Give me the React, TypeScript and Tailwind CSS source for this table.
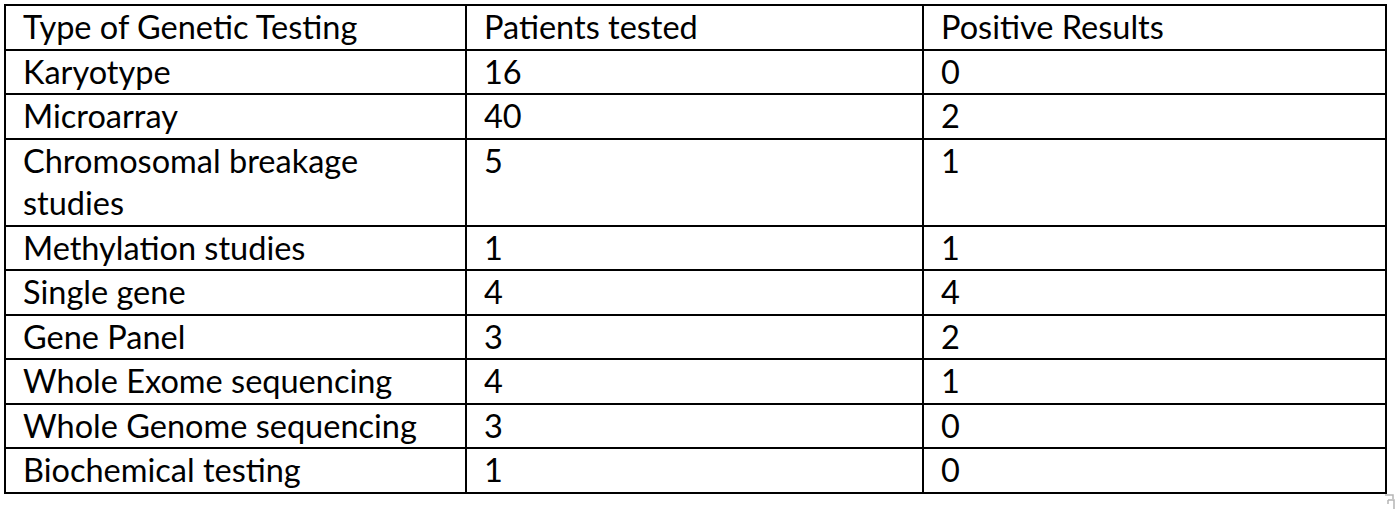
const rows: [string, string, string][] = [
  ["Karyotype", "16", "0"],
  ["Microarray", "40", "2"],
  ["Chromosomal breakage studies", "5", "1"],
  ["Methylation studies", "1", "1"],
  ["Single gene", "4", "4"],
  ["Gene Panel", "3", "2"],
  ["Whole Exome sequencing", "4", "1"],
  ["Whole Genome sequencing", "3", "0"],
  ["Biochemical testing", "1", "0"],
];

const cell = "border-2 border-black px-[17px] align-top";

export default function App() {
  return (
    <div className="relative w-[1398px] h-[512px] bg-white pl-[4px] pt-[4px] font-['Lato',sans-serif] text-[32.5px] text-black leading-[42.5px]">
      <table className="table-fixed border-collapse w-[1381px]">
        <colgroup>
          <col className="w-[461px]" />
          <col className="w-[457px]" />
          <col className="w-[463px]" />
        </colgroup>
        <thead>
          <tr>
            <th className={`${cell} text-left font-normal`}>Type of Genetic Testing</th>
            <th className={`${cell} text-left font-normal`}>Patients tested</th>
            <th className={`${cell} text-left font-normal`}>Positive Results</th>
          </tr>
        </thead>
        <tbody>
          {rows.map(([type, tested, positive]) => (
            <tr key={type}>
              <td className={cell}>
                {type === "Chromosomal breakage studies" ? (
                  <>
                    Chromosomal breakage
                    <br />
                    studies
                  </>
                ) : (
                  type
                )}
              </td>
              <td className={cell}>{tested}</td>
              <td className={cell}>{positive}</td>
            </tr>
          ))}
        </tbody>
      </table>
      {/* resize handle */}
      <svg
        className="absolute left-[1384px] top-[494px]"
        width="12"
        height="16"
        viewBox="0 0 12 16"
        fill="none"
      >
        <path d="M1 1h8v4M4 6h6v9M4 6v4" stroke="#b5b5b5" strokeWidth="1.5" />
      </svg>
    </div>
  );
}
